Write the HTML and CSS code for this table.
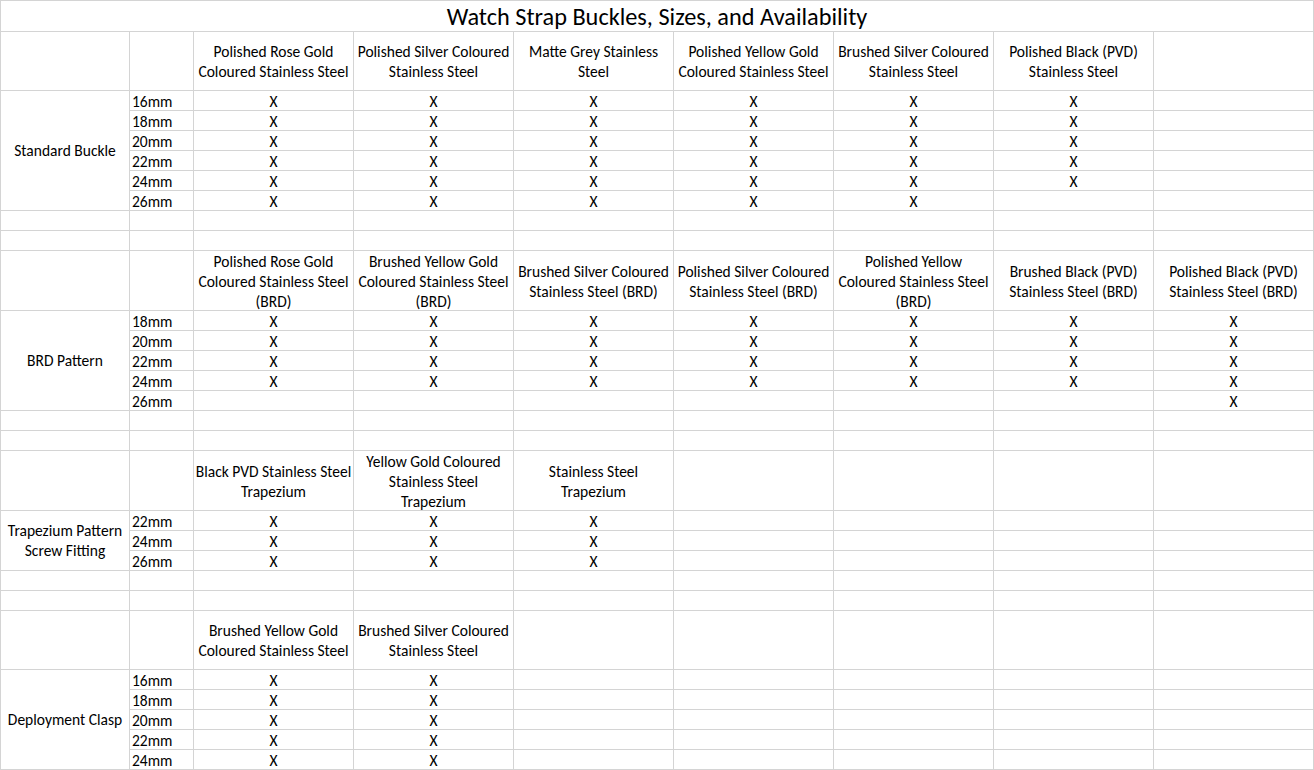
FILE: index.html
```html
<!DOCTYPE html>
<html lang="en">
<head>
<meta charset="utf-8">
<title>Watch Strap Buckles, Sizes, and Availability</title>
<link rel="stylesheet" href="styles.css">
</head>
<body>
<div class="sheet">
  <div class="c t">Watch Strap Buckles, Sizes, and Availability</div>

  <!-- Standard buckle -->
  <div class="c"></div><div class="c"></div>
  <div class="c h">Polished Rose Gold<br>Coloured Stainless Steel</div>
  <div class="c h">Polished Silver Coloured<br>Stainless Steel</div>
  <div class="c h">Matte Grey Stainless<br>Steel</div>
  <div class="c h">Polished Yellow Gold<br>Coloured Stainless Steel</div>
  <div class="c h">Brushed Silver Coloured<br>Stainless Steel</div>
  <div class="c h">Polished Black (PVD)<br>Stainless Steel</div>
  <div class="c h"></div>

  <div class="c lab span6">Standard Buckle</div>
  <div class="c sz">16mm</div><div class="c x">X</div><div class="c x">X</div><div class="c x">X</div><div class="c x">X</div><div class="c x">X</div><div class="c x">X</div><div class="c"></div>
  <div class="c sz">18mm</div><div class="c x">X</div><div class="c x">X</div><div class="c x">X</div><div class="c x">X</div><div class="c x">X</div><div class="c x">X</div><div class="c"></div>
  <div class="c sz">20mm</div><div class="c x">X</div><div class="c x">X</div><div class="c x">X</div><div class="c x">X</div><div class="c x">X</div><div class="c x">X</div><div class="c"></div>
  <div class="c sz">22mm</div><div class="c x">X</div><div class="c x">X</div><div class="c x">X</div><div class="c x">X</div><div class="c x">X</div><div class="c x">X</div><div class="c"></div>
  <div class="c sz">24mm</div><div class="c x">X</div><div class="c x">X</div><div class="c x">X</div><div class="c x">X</div><div class="c x">X</div><div class="c x">X</div><div class="c"></div>
  <div class="c sz">26mm</div><div class="c x">X</div><div class="c x">X</div><div class="c x">X</div><div class="c x">X</div><div class="c x">X</div><div class="c"></div><div class="c"></div>

  <div class="c"></div><div class="c"></div><div class="c"></div><div class="c"></div><div class="c"></div><div class="c"></div><div class="c"></div><div class="c"></div><div class="c"></div>
  <div class="c"></div><div class="c"></div><div class="c"></div><div class="c"></div><div class="c"></div><div class="c"></div><div class="c"></div><div class="c"></div><div class="c"></div>

  <!-- BRD pattern -->
  <div class="c"></div><div class="c"></div>
  <div class="c h tall">Polished Rose Gold<br>Coloured Stainless Steel<br>(BRD)</div>
  <div class="c h tall">Brushed Yellow Gold<br>Coloured Stainless Steel<br>(BRD)</div>
  <div class="c h tall">Brushed Silver Coloured<br>Stainless Steel (BRD)</div>
  <div class="c h tall">Polished Silver Coloured<br>Stainless Steel (BRD)</div>
  <div class="c h tall">Polished Yellow<br>Coloured Stainless Steel<br>(BRD)</div>
  <div class="c h tall">Brushed Black (PVD)<br>Stainless Steel (BRD)</div>
  <div class="c h tall">Polished Black (PVD)<br>Stainless Steel (BRD)</div>

  <div class="c lab span5">BRD Pattern</div>
  <div class="c sz">18mm</div><div class="c x">X</div><div class="c x">X</div><div class="c x">X</div><div class="c x">X</div><div class="c x">X</div><div class="c x">X</div><div class="c x">X</div>
  <div class="c sz">20mm</div><div class="c x">X</div><div class="c x">X</div><div class="c x">X</div><div class="c x">X</div><div class="c x">X</div><div class="c x">X</div><div class="c x">X</div>
  <div class="c sz">22mm</div><div class="c x">X</div><div class="c x">X</div><div class="c x">X</div><div class="c x">X</div><div class="c x">X</div><div class="c x">X</div><div class="c x">X</div>
  <div class="c sz">24mm</div><div class="c x">X</div><div class="c x">X</div><div class="c x">X</div><div class="c x">X</div><div class="c x">X</div><div class="c x">X</div><div class="c x">X</div>
  <div class="c sz">26mm</div><div class="c"></div><div class="c"></div><div class="c"></div><div class="c"></div><div class="c"></div><div class="c"></div><div class="c x">X</div>

  <div class="c"></div><div class="c"></div><div class="c"></div><div class="c"></div><div class="c"></div><div class="c"></div><div class="c"></div><div class="c"></div><div class="c"></div>
  <div class="c"></div><div class="c"></div><div class="c"></div><div class="c"></div><div class="c"></div><div class="c"></div><div class="c"></div><div class="c"></div><div class="c"></div>

  <!-- Trapezium -->
  <div class="c"></div><div class="c"></div>
  <div class="c h tall">Black PVD Stainless Steel<br>Trapezium</div>
  <div class="c h tall">Yellow Gold Coloured<br>Stainless Steel<br>Trapezium</div>
  <div class="c h tall">Stainless Steel<br>Trapezium</div>
  <div class="c"></div><div class="c"></div><div class="c"></div><div class="c"></div>

  <div class="c lab span3">Trapezium Pattern<br>Screw Fitting</div>
  <div class="c sz">22mm</div><div class="c x">X</div><div class="c x">X</div><div class="c x">X</div><div class="c"></div><div class="c"></div><div class="c"></div><div class="c"></div>
  <div class="c sz">24mm</div><div class="c x">X</div><div class="c x">X</div><div class="c x">X</div><div class="c"></div><div class="c"></div><div class="c"></div><div class="c"></div>
  <div class="c sz">26mm</div><div class="c x">X</div><div class="c x">X</div><div class="c x">X</div><div class="c"></div><div class="c"></div><div class="c"></div><div class="c"></div>

  <div class="c"></div><div class="c"></div><div class="c"></div><div class="c"></div><div class="c"></div><div class="c"></div><div class="c"></div><div class="c"></div><div class="c"></div>
  <div class="c"></div><div class="c"></div><div class="c"></div><div class="c"></div><div class="c"></div><div class="c"></div><div class="c"></div><div class="c"></div><div class="c"></div>

  <!-- Deployment clasp -->
  <div class="c"></div><div class="c"></div>
  <div class="c h">Brushed Yellow Gold<br>Coloured Stainless Steel</div>
  <div class="c h">Brushed Silver Coloured<br>Stainless Steel</div>
  <div class="c"></div><div class="c"></div><div class="c"></div><div class="c"></div><div class="c"></div>

  <div class="c lab span5">Deployment Clasp</div>
  <div class="c sz">16mm</div><div class="c x">X</div><div class="c x">X</div><div class="c"></div><div class="c"></div><div class="c"></div><div class="c"></div><div class="c"></div>
  <div class="c sz">18mm</div><div class="c x">X</div><div class="c x">X</div><div class="c"></div><div class="c"></div><div class="c"></div><div class="c"></div><div class="c"></div>
  <div class="c sz">20mm</div><div class="c x">X</div><div class="c x">X</div><div class="c"></div><div class="c"></div><div class="c"></div><div class="c"></div><div class="c"></div>
  <div class="c sz">22mm</div><div class="c x">X</div><div class="c x">X</div><div class="c"></div><div class="c"></div><div class="c"></div><div class="c"></div><div class="c"></div>
  <div class="c sz">24mm</div><div class="c x">X</div><div class="c x">X</div><div class="c"></div><div class="c"></div><div class="c"></div><div class="c"></div><div class="c"></div>
</div>
</body>
</html>
```

FILE: styles.css
```css
html, body {
  margin: 0;
  padding: 0;
  background: #ffffff;
}

body {
  font-family: "Carlito", "Calibri", "Lato", "Liberation Sans", sans-serif;
  font-size: 15.5px;
  color: #000000;
}

.sheet {
  display: grid;
  grid-template-columns: 128px 63px repeat(7, 159px);
  grid-template-rows:
    30px 58px repeat(8, 19px)
    59px repeat(7, 19px)
    59px repeat(5, 19px)
    58px repeat(5, 19px);
  gap: 1px;
  padding: 1px;
  width: 1314px;
  height: 770px;
  box-sizing: border-box;
  background: #d4d4d4;
}

.c {
  background: #ffffff;
  overflow: hidden;
  white-space: nowrap;
}

.t {
  grid-column: 1 / -1;
  display: flex;
  align-items: center;
  justify-content: center;
  font-size: 24.3px;
  line-height: 28px;
  padding-top: 2px;
}

.h {
  display: flex;
  align-items: center;
  justify-content: center;
  text-align: center;
  line-height: 20px;
  padding-top: 1px;
}

.h.tall {
  padding-top: 3px;
}

.x {
  text-align: center;
  line-height: 20px;
  padding-top: 1px;
}

.sz {
  padding-left: 2px;
  line-height: 20px;
  padding-top: 1px;
}

.lab {
  display: flex;
  align-items: center;
  justify-content: center;
  text-align: center;
  line-height: 20px;
  padding-top: 1px;
}

.span6 { grid-row: span 6; }
.span5 { grid-row: span 5; }
.span3 { grid-row: span 3; }
```
